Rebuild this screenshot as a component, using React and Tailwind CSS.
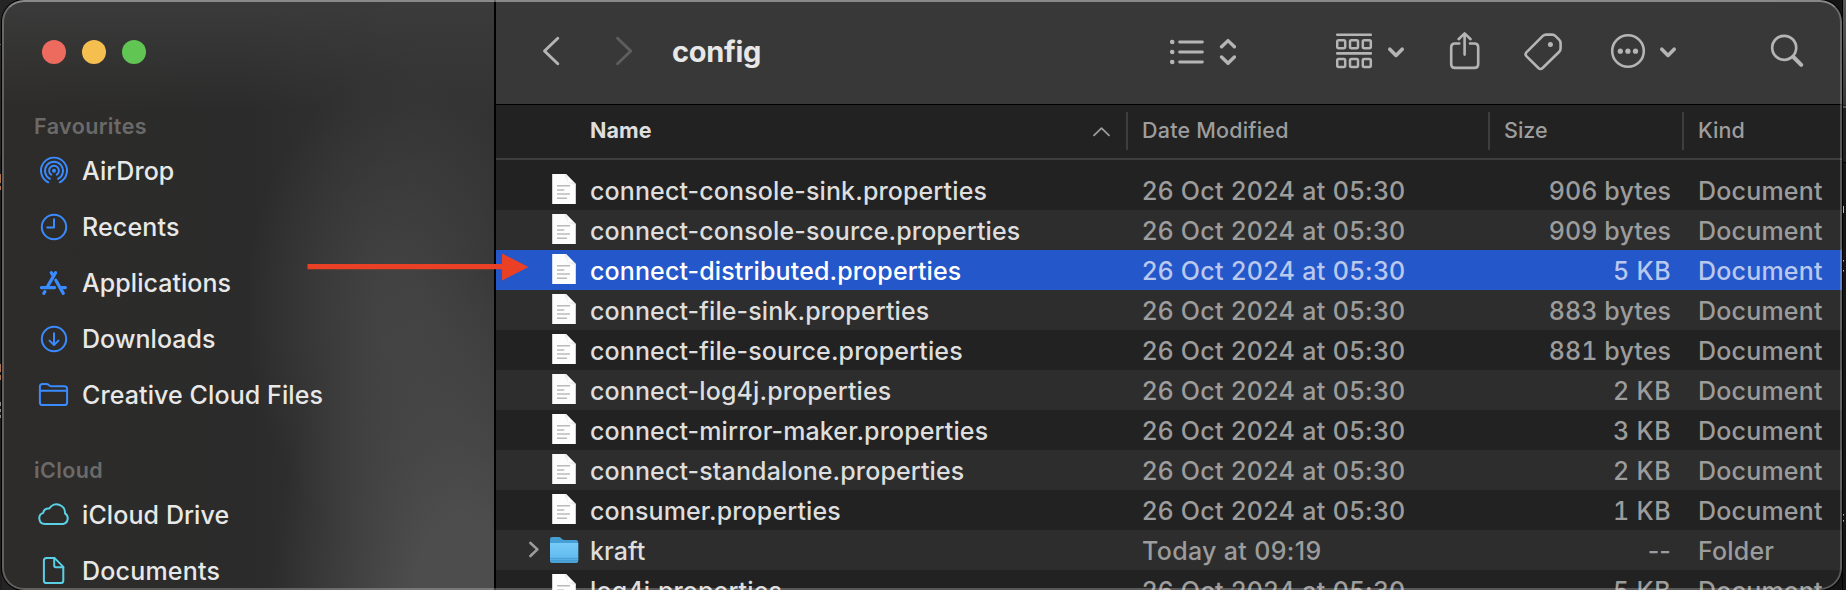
const files = [
  { name: 'connect-console-sink.properties', size: '906 bytes' },
  { name: 'connect-console-source.properties', size: '909 bytes' },
  { name: 'connect-distributed.properties', size: '5 KB', selected: true },
  { name: 'connect-file-sink.properties', size: '883 bytes' },
  { name: 'connect-file-source.properties', size: '881 bytes' },
  { name: 'connect-log4j.properties', size: '2 KB' },
  { name: 'connect-mirror-maker.properties', size: '3 KB' },
  { name: 'connect-standalone.properties', size: '2 KB' },
  { name: 'consumer.properties', size: '1 KB' },
  { name: 'kraft', size: '--', folder: true },
  { name: 'log4j.properties', size: '5 KB' },
];

const stroke = { fill: 'none', stroke: 'currentColor', strokeLinecap: 'round', strokeLinejoin: 'round' };

function AirDropIcon() {
  return (
    <svg className="h-8 w-9 text-[#3a8bff]" viewBox="36 155 36 32" {...stroke} strokeWidth="1.9">
      <circle cx="54" cy="170.7" r="2" fill="currentColor" stroke="none" />
      <path d="M51.3 174.8 A4.9 4.9 0 1 1 56.7 174.8" />
      <path d="M50 178.8 A9 9 0 1 1 58 178.8" />
      <path d="M48.3 182.3 A13 13 0 1 1 59.7 182.3" />
    </svg>
  );
}

function RecentsIcon() {
  return (
    <svg className="h-8 w-9 text-[#3a8bff]" viewBox="36 211 36 32" {...stroke} strokeWidth="2">
      <circle cx="54" cy="227" r="12.2" />
      <path d="M54 219.3 V227.6 H47.2" />
    </svg>
  );
}

function ApplicationsIcon() {
  return (
    <svg className="h-8 w-9 text-[#3a8bff]" viewBox="36 267 36 32" {...stroke} strokeWidth="3.2">
      <path d="M55.6 272.6 L47.6 286.4 M51.3 272.6 L53.4 276.2" />
      <path d="M41.4 287.6 H54.6 M61.8 287.6 H65.4" />
      <path d="M55.8 280.2 L63.3 293.4" />
      <path d="M44.9 291.6 L43.8 293.4" />
    </svg>
  );
}

function DownloadsIcon() {
  return (
    <svg className="h-8 w-9 text-[#3a8bff]" viewBox="36 323 36 32" {...stroke} strokeWidth="2">
      <circle cx="54" cy="339" r="12.2" />
      <path d="M54 333.3 V344.6 M49.5 340.6 L54 345 L58.5 340.6" />
    </svg>
  );
}

function FolderOutlineIcon() {
  return (
    <svg className="h-8 w-9 text-[#3a8bff]" viewBox="36 379 36 32" {...stroke} strokeWidth="2">
      <path d="M39.9 386.4 Q39.9 383.9 42.6 383.9 H46.3 Q47.6 383.9 48.6 384.8 L49.3 385.4 Q50.2 386.2 51.6 386.2 H64.4 Q67.1 386.2 67.1 388.8 V402.4 Q67.1 405 64.4 405 H42.6 Q39.9 405 39.9 402.4 Z" />
      <path d="M40 390.7 H67" />
    </svg>
  );
}

function CloudIcon() {
  return (
    <svg className="h-8 w-9 text-[#5ad0e6]" viewBox="36 499 36 32" {...stroke} strokeWidth="2">
      <path d="M44.8 524 H63.2 A5.9 5.9 0 0 0 65 513.3 A8.4 8.4 0 0 0 49.3 508.6 A4.9 4.9 0 0 0 43.2 512.9 A5.7 5.7 0 0 0 44.8 524 Z" />
    </svg>
  );
}

function DocumentOutlineIcon() {
  return (
    <svg className="h-8 w-9 text-[#5ad0e6]" viewBox="36 555 36 32" {...stroke} strokeWidth="2">
      <path d="M46.6 557.9 H54.4 L63.3 566.9 V580.4 Q63.3 583 60.6 583 H46.6 Q43.9 583 43.9 580.4 V560.5 Q43.9 557.9 46.6 557.9 Z" />
      <path d="M54.2 558 V565.6 Q54.2 567.3 55.9 567.3 H63.3" />
    </svg>
  );
}

function FileIcon() {
  return (
    <svg className="h-8 w-8 shrink-0" viewBox="548 173 32 32">
      <defs>
        <linearGradient id="fold" x1="0" y1="1" x2="1" y2="0">
          <stop offset="0" stopColor="#ffffff" />
          <stop offset="1" stopColor="#cfcfcf" />
        </linearGradient>
      </defs>
      <path d="M552.2 174 H566 L575.8 184 V204 H552.2 Z" fill="#fdfdfd" />
      <path d="M564.5 174 H566 L575.8 184 V185.3 L567.5 182.5 Z" fill="url(#fold)" />
      <path d="M565.8 174.6 Q568.4 178 567.6 182.2 Q572.5 181.3 575.2 184 Z" fill="#ffffff" />
      <path d="M557 185.8 H570 M557 190 H564.3 M557 194 H570 M557 198.2 H567" stroke="#bababa" strokeWidth="1.5" fill="none" />
    </svg>
  );
}

function FolderIcon() {
  return (
    <svg className="h-8 w-8 shrink-0" viewBox="548 533 32 32">
      <defs>
        <linearGradient id="folder" x1="0" y1="0" x2="0" y2="1">
          <stop offset="0" stopColor="#78cbf8" />
          <stop offset="0.7" stopColor="#63bbee" />
          <stop offset="1" stopColor="#479fd5" />
        </linearGradient>
      </defs>
      <path d="M550 539 Q550 537 552 537 H558.6 Q560 537 561 538 L562.2 539.2 Q563 540 564.4 540 H576 Q578.2 540 578.2 542 V560 H550 Z" fill="#459ed4" />
      <path d="M550 543 H578.2 V561 Q578.2 563 576.4 563 H551.8 Q550 563 550 561 Z" fill="url(#folder)" />
      <path d="M550.4 558.4 H577.8 M550.4 560.6 H577.8" stroke="#4499d0" strokeWidth="0.8" />
    </svg>
  );
}

const favourites = [
  ['AirDrop', AirDropIcon, 'tracking-[0.05px]'],
  ['Recents', RecentsIcon, 'tracking-[0.15px]'],
  ['Applications', ApplicationsIcon, 'tracking-[0.05px]'],
  ['Downloads', DownloadsIcon, 'tracking-[0.02px]'],
  ['Creative Cloud Files', FolderOutlineIcon, 'tracking-[0.1px]'],
];
const cloud = [
  ['iCloud Drive', CloudIcon, 'tracking-[0.1px]'],
  ['Documents', DocumentOutlineIcon, 'tracking-[0.2px]'],
];

function SidebarSection({ title, items }) {
  return (
    <section>
      <h2 className="flex h-[33px] items-center pl-8 text-[21.5px] font-semibold tracking-[0.4px] text-[#6b6a69]">{title}</h2>
      <ul>
        {items.map(([label, Icon, tracking]) => (
          <li key={label} className="flex h-14 items-center gap-2.5 pl-[34px] text-[25px] leading-[38px] font-[450] text-[#e8e8e8]">
            <Icon />
            <span className={tracking}>{label}</span>
          </li>
        ))}
      </ul>
    </section>
  );
}

function Sidebar() {
  return (
    <aside className="h-full w-[494px] shrink-0 border-r-2 border-black bg-[#2b2b2a] bg-[linear-gradient(to_bottom,#3b3b3b_0,#3b3b3b00_110px),radial-gradient(ellipse_190px_330px_at_460px_600px,#4d4d4d_25%,#4d4d4d00_100%),radial-gradient(ellipse_150px_240px_at_395px_310px,#424242_15%,#42424200_100%),linear-gradient(to_right,#2d2c2a_0,#2b2b2b_240px,#333333_420px)]">
      <div className="flex h-[110px] items-start gap-4 pt-10 pl-10">
        <span className="size-6 rounded-full bg-[#ed6a5e]" />
        <span className="size-6 rounded-full bg-[#f5bf4f]" />
        <span className="size-6 rounded-full bg-[#61c554]" />
      </div>
      <div className="flex flex-col gap-[31px]">
        <SidebarSection title="Favourites" items={favourites} />
        <SidebarSection title="iCloud" items={cloud} />
      </div>
    </aside>
  );
}

function Toolbar() {
  return (
    <header className="flex h-[105px] shrink-0 items-center border-b border-black bg-[#383838] pt-0.5 pl-[46px] text-[#b5b5b5]">
      <svg className="h-[46px] w-5" viewBox="542 30 20 46" {...stroke} strokeWidth="2.9">
        <path d="M557.8 38.2 L544.5 51 L557.8 63.8" />
      </svg>
      <svg className="ml-[52px] h-[46px] w-5 text-[#5e5e5e]" viewBox="614 30 20 46" {...stroke} strokeWidth="2.9">
        <path d="M617.5 38.2 L630.8 51 L617.5 63.8" />
      </svg>
      <h1 className="-mt-0.5 ml-[38px] w-[498px] text-[29px] leading-[46px] font-bold tracking-[-0.3px] text-[#e7e7e7]">config</h1>
      <svg className="h-[46px] w-[66px]" viewBox="1170 30 66 46" {...stroke} strokeWidth="2.8">
        <g fill="currentColor" stroke="none">
          <circle cx="1172.2" cy="42" r="2.3" />
          <circle cx="1172.2" cy="52" r="2.3" />
          <circle cx="1172.2" cy="62" r="2.3" />
        </g>
        <path d="M1179.6 42 H1202.4 M1179.6 52 H1202.4 M1179.6 62 H1202.4" />
        <path d="M1221.6 46.8 L1228 40.6 L1234.4 46.8 M1221.6 57 L1228 63.2 L1234.4 57" strokeWidth="3.4" />
      </svg>
      <svg className="ml-[100px] h-[46px] w-[70px]" viewBox="1336 30 70 46" {...stroke} strokeWidth="2.6">
        <path d="M1337.2 34.7 H1370.8 M1337.2 53.4 H1370.8" />
        <g strokeWidth="2.5">
          <rect x="1337.2" y="40.2" width="8" height="8" rx="1.4" />
          <rect x="1350" y="40.2" width="8" height="8" rx="1.4" />
          <rect x="1362.8" y="40.2" width="8" height="8" rx="1.4" />
          <rect x="1337.2" y="59" width="8" height="8" rx="1.4" />
          <rect x="1350" y="59" width="8" height="8" rx="1.4" />
          <rect x="1362.8" y="59" width="8" height="8" rx="1.4" />
        </g>
        <path d="M1389.8 49.2 L1396 55.4 L1402.2 49.2" strokeWidth="3.6" />
      </svg>
      <svg className="ml-[42px] h-[46px] w-8" viewBox="1448 30 32 46" {...stroke} strokeWidth="2.6">
        <path d="M1459.3 43.5 H1455 Q1451.2 43.5 1451.2 47.3 V64.2 Q1451.2 67.9 1455 67.9 H1474.4 Q1478.2 67.9 1478.2 64.2 V47.3 Q1478.2 43.5 1474.4 43.5 H1470" />
        <path d="M1464.6 34 V54.6 M1458.6 39.2 L1464.6 33.4 L1470.6 39.2" />
      </svg>
      <svg className="ml-11 h-[46px] w-10" viewBox="1524 30 40 46" {...stroke} strokeWidth="2.6">
        <path d="M1526.4 52.4 L1542.6 36.2 Q1544.2 34.6 1546.4 34.6 H1552.2 Q1554 34.6 1555.3 35.9 L1559.1 39.7 Q1560.6 41.2 1560.6 43.2 V48.2 Q1560.6 50.4 1559 52 L1542.6 68 Q1540.5 70 1538.4 68 L1526.6 56.4 Q1524.6 54.4 1526.4 52.4 Z" />
        <circle cx="1550.4" cy="44.4" r="2.5" fill="currentColor" stroke="none" />
      </svg>
      <svg className="ml-[46px] h-[46px] w-[68px]" viewBox="1610 30 68 46" {...stroke} strokeWidth="2.6">
        <circle cx="1628" cy="51" r="15.8" />
        <g fill="currentColor" stroke="none">
          <circle cx="1620.3" cy="51.2" r="2.6" />
          <circle cx="1627.9" cy="51.2" r="2.6" />
          <circle cx="1635.5" cy="51.2" r="2.6" />
        </g>
        <path d="M1661.8 49.2 L1668 55.4 L1674.2 49.2" strokeWidth="3.6" />
      </svg>
      <svg className="ml-[92px] h-[46px] w-[34px]" viewBox="1770 30 34 46" {...stroke} strokeWidth="2.7">
        <circle cx="1784.2" cy="47.8" r="12" />
        <path d="M1793.4 57 L1801.2 64.8" strokeWidth="4" />
      </svg>
    </header>
  );
}

const columns = 'grid grid-cols-[630px_362px_194px_160px]';

function ColumnHeader() {
  return (
    <div className={`${columns} h-[55px] shrink-0 items-center border-b-2 border-[#3e3e3e] pb-px text-[21.5px] font-medium text-[#9d9d9d]`}>
      <div className="flex items-center justify-between pr-[15px] pl-[94px]">
        <span className="-mt-0.5 font-bold tracking-[0.1px] text-[#dedede]">Name</span>
        <svg className="h-4 w-5" viewBox="1091 123 20 16" {...stroke} strokeWidth="1.8">
          <path d="M1094 135.4 L1101.5 128.2 L1109 135.4" />
        </svg>
      </div>
      <div className="flex h-[38px] items-center border-l-2 border-[#3e3e3e] pb-0.5 pl-3.5 tracking-[0.2px]">Date Modified</div>
      <div className="flex h-[38px] items-center border-l-2 border-[#3e3e3e] pb-0.5 pl-3.5">Size</div>
      <div className="flex h-[38px] items-center border-l-2 border-[#3e3e3e] pb-0.5 pl-3.5">Kind</div>
    </div>
  );
}

function FileRow({ file }) {
  const tone = file.selected
    ? 'bg-[#2457c9] text-[#b9c8ee]'
    : 'odd:bg-[#222222] even:bg-[#2d2d2d] text-[#9c9c9c]';
  const sizeStyle = file.folder
    ? 'tracking-[0.1px]'
    : file.size.endsWith('KB')
      ? 'tabular-nums tracking-[0.4px]'
      : 'tabular-nums tracking-[0.1px]';
  return (
    <li className={`${columns} h-10 items-center text-[25px] leading-9 font-[450] ${tone}`}>
      <div className={`flex items-center pl-8 ${file.selected ? 'text-white' : 'text-[#dedede]'}`}>
        <span className="w-5">
          {file.folder && (
            <svg className="h-5 w-3 text-[#9c9c9c]" viewBox="528 540 12 20" {...stroke} strokeWidth="2.6">
              <path d="M530.4 543 L537.4 549.4 L530.4 556" />
            </svg>
          )}
        </span>
        <span className="-mt-0.5">{file.folder ? <FolderIcon /> : <FileIcon />}</span>
        <span className="ml-[10px] pt-px whitespace-nowrap tracking-[0.12px]">{file.name}</span>
      </div>
      <div className="pt-px pl-4 whitespace-nowrap tracking-[0.34px]">{file.folder ? 'Today at 09:19' : '26 Oct 2024 at 05:30'}</div>
      <div className={`pt-px pr-[11px] text-right whitespace-nowrap ${sizeStyle}`}>{file.size}</div>
      <div className="pt-px pl-4 tracking-[0.2px]">{file.folder ? 'Folder' : 'Document'}</div>
    </li>
  );
}

function LeftBackdrop() {
  return (
    <svg className="h-full w-0.5 shrink-0 bg-[#1e1e1e]" viewBox="0 0 2 590" preserveAspectRatio="none">
      <rect width="2" height="157" fill="#262626" />
      <path d="M0 44.5 H2" stroke="#6a6a6a" />
      <path d="M0.5 174 V183 M0.5 186 V190 M0.5 364 V372 M0.5 375 V380" stroke="#b06f48" />
      <path d="M0.5 402 V406 M0.5 409 V412 M0.5 415 V418" stroke="#8a8a8a" />
    </svg>
  );
}

function RightBackdrop() {
  return (
    <svg className="h-full w-1 shrink-0 bg-[#141414]" viewBox="1842 0 4 590" preserveAspectRatio="none">
      <defs>
        <linearGradient id="backdrop" x1="0" y1="0" x2="0" y2="1">
          <stop offset="0" stopColor="#585858" />
          <stop offset="1" stopColor="#383838" />
        </linearGradient>
      </defs>
      <rect x="1842" width="4" height="105" fill="url(#backdrop)" />
      <rect x="1842" y="105" width="4" height="57" fill="#202020" />
      <path d="M1842 107 H1846" stroke="#5a5a5a" strokeWidth="2" />
      <path d="M1842 162.5 H1846" stroke="#000000" />
      <path d="M1842.5 0 V590" stroke="#000000" />
      <path d="M1843.5 206 V213 M1843.5 260 V261.5 M1843.5 270 V271.5 M1843.5 514 V515.5 M1843.5 520 V521.5" stroke="#b5b5b5" />
    </svg>
  );
}

export default function App() {
  return (
    <div className="relative flex h-[590px] w-[1846px] overflow-hidden bg-[#1a1a1a] bg-[linear-gradient(to_right,#242424_50%,#141414_50%)] font-['Inter','Liberation_Sans',sans-serif]">
      <LeftBackdrop />
      <div className="relative flex h-[590px] w-[1840px] shrink-0 overflow-hidden rounded-[22px] bg-[#222222] shadow-[0_0_0_1px_#000]">
        <Sidebar />
        <main className="flex min-w-0 flex-1 flex-col">
          <Toolbar />
          <ColumnHeader />
          <ul className="mt-2.5">
            {files.map((file) => (
              <FileRow key={file.name} file={file} />
            ))}
          </ul>
        </main>
        <div className="pointer-events-none absolute inset-0 rounded-[22px] border-2 border-white/25 border-t-white/40" />
      </div>
      <RightBackdrop />
      <svg className="absolute top-[250px] left-[300px] h-8 w-[240px]" viewBox="300 250 240 32">
        <path d="M307.5 264 H502 V253.5 L528.5 267 L502 280.5 V269.2 H307.5 Z" fill="#ea4025" />
      </svg>
    </div>
  );
}
